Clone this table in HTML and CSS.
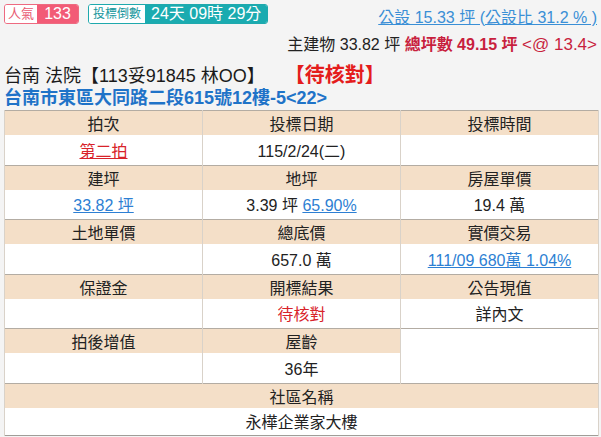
FILE: index.html
```html
<!DOCTYPE html>
<html lang="zh-Hant">
<head>
<meta charset="utf-8">
<link rel="stylesheet" href="styles.css">
</head>
<body>
<div class="page">
  <div class="top">
    <div class="badges">
      <span class="badge pink"><span class="lbl">人氣</span><span class="val">133</span></span>
      <span class="badge teal"><span class="lbl">投標倒數</span><span class="val">24天 09時 29分</span></span>
    </div>
    <a class="gongshe" href="#">公設 15.33 坪 (公設比 31.2 % )</a>
  </div>
  <div class="area">主建物 33.82 坪 <b class="crim">總坪數 49.15 坪</b> <span class="crim at">&lt;@ 13.4&gt;</span></div>
  <div class="title">台南 法院【113妥91845 林OO】<span class="status">【待核對】</span></div>
  <div class="addr">台南市東區大同路二段615號12樓-5&lt;22&gt;</div>
  <table class="info">
    <colgroup><col class="c"><col class="c"><col class="c"></colgroup>
    <tr class="h"><th>拍次</th><th>投標日期</th><th>投標時間</th></tr>
    <tr class="d"><td><a class="red" href="#">第二拍</a></td><td>115/2/24(二)</td><td></td></tr>
    <tr class="h"><th>建坪</th><th>地坪</th><th>房屋單價</th></tr>
    <tr class="d"><td><a href="#">33.82 坪</a></td><td>3.39 坪 <a href="#">65.90%</a></td><td>19.4 萬</td></tr>
    <tr class="h"><th>土地單價</th><th>總底價</th><th>實價交易</th></tr>
    <tr class="d"><td></td><td>657.0 萬</td><td><a href="#">111/09 680萬 1.04%</a></td></tr>
    <tr class="h"><th>保證金</th><th>開標結果</th><th>公告現值</th></tr>
    <tr class="d"><td></td><td><span class="redtxt">待核對</span></td><td>詳內文</td></tr>
    <tr class="h"><th>拍後增值</th><th>屋齡</th><td class="blank" rowspan="2"></td></tr>
    <tr class="d"><td></td><td>36年</td></tr>
    <tr class="h"><th colspan="3">社區名稱</th></tr>
    <tr class="d last"><td colspan="3">永樺企業家大樓</td></tr>
  </table>
</div>
</body>
</html>
```

FILE: styles.css
```css
* { box-sizing: border-box; }
html, body { margin: 0; padding: 0; }
body {
  background: #f4f4f4;
  font-family: "Liberation Sans", "Noto Sans CJK TC", sans-serif;
  color: #222;
  font-size: 16px;
}
.page { padding: 4px 2px 0 4px; }
.top {
  display: flex;
  justify-content: space-between;
  align-items: flex-start;
  height: 24px;
}
.badges { display: flex; gap: 9px; padding-left: 0; }
.badge {
  display: flex;
  height: 20px;
  border-radius: 3px;
  overflow: hidden;
  border: 1px solid;
  line-height: 18px;
}
.badge .lbl { background: #fff; font-size: 13px; }
.badge .val { color: #fff; }
.pink { border-color: #ee6a80; }
.pink .lbl { color: #e85a72; padding: 0 3px; }
.pink .val { background: #f25b76; font-size: 16px; width: 41px; text-align: center; }
.teal { border-color: #1fa9ad; }
.teal .lbl { color: #15969c; font-size: 12px; padding: 0 4px; }
.teal .val { background: #1aabb0; font-size: 16px; padding: 0 6px; }
.gongshe {
  color: #3a8fd6;
  text-decoration: underline;
  margin-top: 5px;
  margin-right: 2px;
  line-height: 18px;
}
.area {
  text-align: right;
  line-height: 18px;
  margin-top: 8px;
  margin-right: 2px;
}
.crim { color: #c81f3e; }
.at { font-size: 17px; }
.title {
  font-size: 18px;
  line-height: 22px;
  margin-top: 10px;
  color: #1a1a1a;
}
.status { color: #e41c1c; font-weight: bold; margin-left: 30px; font-size: 20px; }
.addr {
  font-size: 18px;
  font-weight: bold;
  color: #1f73c8;
  line-height: 22px;
  margin-top: 0;
}
.info {
  width: 595px;
  margin-top: 1px;
  border-collapse: collapse;
  table-layout: fixed;
  border: 1px solid #a09d98;
  background: #fff;
}
.info col.c { width: 33.33%; }
.info th, .info td {
  text-align: center;
  font-weight: normal;
  padding: 0;
  border-left: 1px solid #d9d2c9;
  border-right: 1px solid #d9d2c9;
  color: #222;
}
.info tr.h th { background: #f4dfc8; height: 23px; }
.info tr.h { border-top: 1px solid #b3aca3; }
.info tr.d td { height: 30px; background: #fff; }
.info tr.d.last td { height: 28px; }
.info td.blank { background: #fff; }
.info a { color: #2d7fd3; text-decoration: underline; }
.info a.red { color: #d8232a; }
.redtxt { color: #d8232a; }
```
